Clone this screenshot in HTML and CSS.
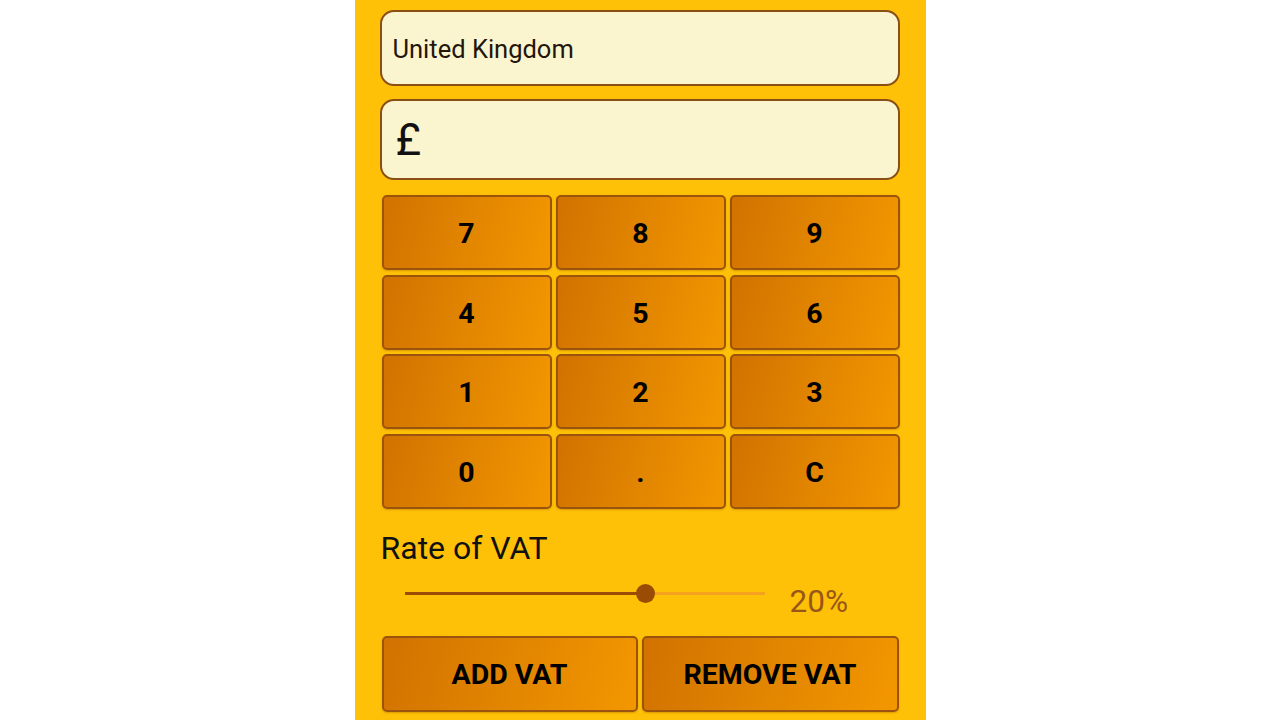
FILE: index.html
```html
<!DOCTYPE html>
<html>
<head>
  <meta charset="UTF-8" />
  <title>VAT Calculator</title>
  <link rel="stylesheet" href="styles.css">
</head>
<body>
  <div class="panel">
    <div class="field country">United Kingdom</div>
    <div class="field amount">£</div>

    <div class="keypad">
      <button class="key">7</button>
      <button class="key">8</button>
      <button class="key">9</button>
      <button class="key">4</button>
      <button class="key">5</button>
      <button class="key">6</button>
      <button class="key">1</button>
      <button class="key">2</button>
      <button class="key">3</button>
      <button class="key">0</button>
      <button class="key">.</button>
      <button class="key">C</button>
    </div>

    <div class="rate-label">Rate of VAT</div>
    <div class="rate-row">
      <div class="slider">
        <div class="track-done" style="width: 67%"></div>
        <div class="thumb" style="left: 67%"></div>
      </div>
      <span class="rate-value">20%</span>
    </div>

    <div class="actions">
      <button class="key action">ADD VAT</button>
      <button class="key action">REMOVE VAT</button>
    </div>
  </div>
</body>
</html>
```

FILE: styles.css
```css
body {
  margin: 0;
  background: #fff;
  font-family: Roboto, "Liberation Sans", sans-serif;
}

.panel {
  width: 571px;
  height: 720px;
  margin: 0 auto;
  padding: 10px 26px 0 25px;
  box-sizing: border-box;
  background: #ffc107;
  overflow: hidden;
}

.field {
  box-sizing: border-box;
  background: #fbf5cf;
  border: 2px solid #8a4f14;
  border-radius: 14px;
  color: #24160c;
  display: flex;
  align-items: center;
  padding-left: 11px;
}

.country {
  height: 76px;
  font-size: 25.5px;
  padding-top: 1px;
}

.amount {
  height: 81px;
  margin-top: 13px;
  font-size: 44px;
  padding-left: 14px;
  color: #111;
}

.keypad {
  display: grid;
  grid-template-columns: repeat(3, 170px);
  grid-auto-rows: 75px;
  gap: 4.6px 4px;
  margin: 15px 0 0 2px;
}

.key {
  font-family: Roboto, "Liberation Sans", sans-serif;
  font-weight: bold;
  font-size: 28.5px;
  color: #000;
  border: 2px solid #9a540e;
  border-radius: 5px;
  background: linear-gradient(105deg, #d27200 0%, #e08300 45%, #f39700 100%);
  box-shadow: 0 1px 2px rgba(150, 80, 0, 0.35);
  cursor: pointer;
  padding: 2px 0 0;
}

.rate-label {
  margin-top: 20px;
  font-size: 32px;
  color: #111;
  padding-left: 1px;
}

.rate-row {
  display: flex;
  align-items: center;
  margin-top: 12px;
  padding-left: 25px;
  height: 44px;
}

.slider {
  position: relative;
  width: 360px;
  height: 3px;
  background: #f6a21e;
  margin-top: -14px;
}

.track-done {
  height: 100%;
  background: #9a4c05;
}

.thumb {
  position: absolute;
  top: 50%;
  width: 19px;
  height: 19px;
  margin: -9.5px 0 0 -9.5px;
  border-radius: 50%;
  background: #9a4c05;
}

.rate-value {
  margin-left: 25px;
  font-size: 31.5px;
  color: #98561a;
  padding-top: 2px;
}

.actions {
  display: grid;
  grid-template-columns: 256px 257px;
  gap: 4px;
  margin: 13px 0 0 2px;
}

.action {
  height: 76px;
}
```
